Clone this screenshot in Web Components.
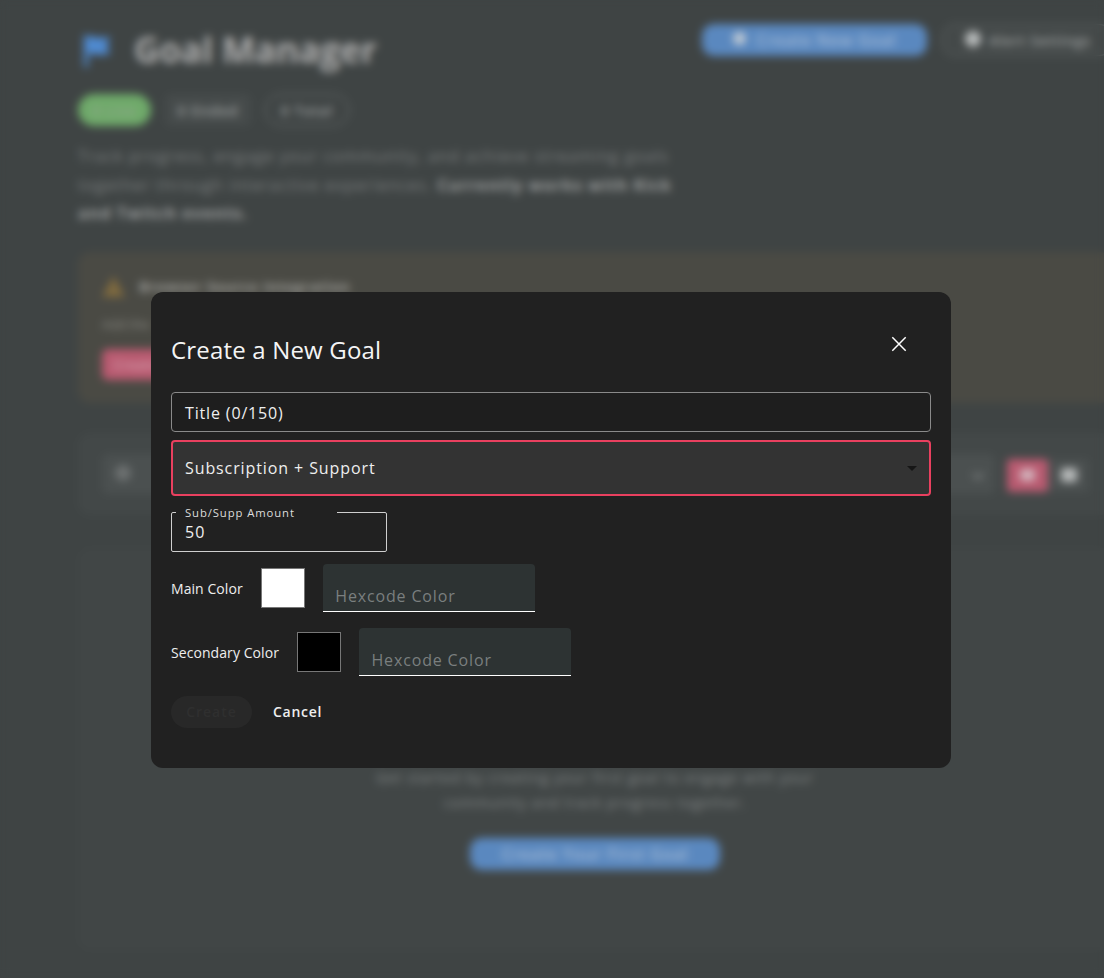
<!DOCTYPE html>
<html>
<head>
<meta charset="utf-8">
<title>Goal Manager</title>
<style>
html, body { margin: 0; height: 100%; overflow: hidden; background: #3f4444; }
body { font-family: "Open Sans", "Noto Sans", sans-serif; }
</style>
</head>
<body>
<goal-page>
  <goal-header></goal-header>
  <goal-alert></goal-alert>
  <goal-toolbar></goal-toolbar>
  <goal-empty></goal-empty>
</goal-page>
<goal-dialog></goal-dialog>

<script>
function shadow(el, html) {
  el.attachShadow({ mode: 'open' }).innerHTML = html
}

customElements.define('goal-page', class extends HTMLElement {
  connectedCallback() {
    shadow(this, `
      <style>
        :host { display: block; width: 1034px; padding: 24px 0 0 78px; color: #a9abab; }
        .col { display: flex; flex-direction: column; }
      </style>
      <div class="col"><slot></slot></div>`)
  }
})

customElements.define('pill-button', class extends HTMLElement {
  connectedCallback() {
    shadow(this, `
      <style>
        :host { display: inline-flex; align-items: center; justify-content: center; gap: 10px; box-sizing: border-box;
          height: 32px; border-radius: 12px; background: #5a88bf; color: #a5bbd6; font-size: 16px; font-weight: 600; letter-spacing: .8px; white-space: nowrap; }
        :host([kind=outline]) { background: #444949; color: #a0a3a3; border: 1px solid #666b6b; justify-content: flex-start; padding-left: 22px; gap: 8px; font-size: 14px; letter-spacing: .8px; }
        :host([kind=pink]) { background: #b95a70; color: #d39aaa; height: 31px; border-radius: 6px; font-size: 14px; justify-content: flex-start; padding-left: 11px; letter-spacing: 0; }
        i { width: 13px; height: 13px; margin-top: -3px; border-radius: 50%; background: #c4ccd4; }
        :host([kind=outline]) i { width: 16px; height: 16px; margin-top: -2px; background: #b9bcbc; }
      </style>
      <i part="dot"></i><slot></slot>`)
    if (!this.hasAttribute('icon')) this.shadowRoot.querySelector('i').remove()
  }
})

customElements.define('goal-chip', class extends HTMLElement {
  connectedCallback() {
    shadow(this, `
      <style>
        :host { display: inline-flex; align-items: center; justify-content: center; box-sizing: border-box; height: 32px; border-radius: 16px;
          font-size: 14px; font-weight: 600; letter-spacing: 1px; background: #6faa6a; color: #8fa88c; }
        :host([kind=plain]) { background: #464b4b; color: #a0a3a3; border-radius: 6px; }
        :host([kind=outline]) { background: none; border: 1px solid #767b7b; color: #a3a6a6; }
      </style>
      <slot></slot>`)
  }
})

customElements.define('goal-header', class extends HTMLElement {
  connectedCallback() {
    shadow(this, `
      <style>
        :host { display: block; height: 228px; }
        .top { display: flex; justify-content: space-between; height: 70px; }
        .brand { display: flex; align-items: center; gap: 22px; padding-left: 4px; height: 52px; }
        svg { width: 30px; height: 34px; display: block; }
        h1 { margin: 0; font-size: 35px; font-weight: 700; color: #adadad; line-height: 52px; }
        .actions { display: flex; gap: 15px; }
        .chips { display: flex; gap: 14px; }
        p { margin: 16px 0 0; width: 610px; font-size: 16px; letter-spacing: 1.1px; line-height: 28.5px; color: #7e8181; }
        b { color: #a0a2a2; }
      </style>
      <div class="top">
        <div class="brand">
          <svg viewBox="0 0 30 34"><path d="M2 2h4v2c6-1.500 9 .8 13 .8l9-.8-3 8.500 3 8.500-10 1c-4 0-7-2-12-1v13H2z" fill="#4f8ad0"/></svg>
          <h1>Goal Manager</h1>
        </div>
        <div class="actions">
          <pill-button icon style="width:225px;letter-spacing:.7px">Create New Goal</pill-button>
          <pill-button icon kind="outline" style="width:170px">Alert Settings</pill-button>
        </div>
      </div>
      <div class="chips">
        <goal-chip style="width:73px">0 Live</goal-chip>
        <goal-chip kind="plain" style="width:86px">0 Ended</goal-chip>
        <goal-chip kind="outline" style="width:84px">0 Total</goal-chip>
      </div>
      <p>Track progress, engage your community, and achieve streaming goals<br>together through interactive experiences. <b>Currently works with Kick</b><br><b>and Twitch events.</b></p>`)
  }
})

customElements.define('goal-alert', class extends HTMLElement {
  connectedCallback() {
    shadow(this, `
      <style>
        :host { display: block; box-sizing: border-box; height: 151px; padding: 23px 24px; background: #4a4a44; border-radius: 12px; }
        .head { display: flex; align-items: center; gap: 14px; height: 22px; font-size: 14px; font-weight: 700; letter-spacing: .75px; color: #a0a09c; }
        svg { width: 23px; height: 21px; display: block; }
        p { margin: 17px 0 0; font-size: 13px; line-height: 20px; color: #8a8a84; }
      </style>
      <div class="head">
        <svg viewBox="0 0 23 21"><path d="M11.5 0 23 21H0z" fill="#7f6a3f"/></svg>
        <span>Browser Source Integration</span>
      </div>
      <p>Add the</p>
      <pill-button kind="pink" style="width:120px;margin-top:15px">Create</pill-button>`)
  }
})

customElements.define('goal-toolbar', class extends HTMLElement {
  connectedCallback() {
    shadow(this, `
      <style>
        :host { display: flex; align-items: center; box-sizing: border-box; height: 82px; margin-top: 30px; padding: 0 23px 0 24px; background: #434848; border-radius: 12px; }
        .search { flex: 1; height: 40px; background: #4b5050; border-radius: 6px; display: flex; align-items: center; justify-content: space-between; padding: 0 5px 0 13px; }
        .search i { width: 16px; height: 16px; border-radius: 50%; background: #6d7171; margin-top: -2px; }
        .search svg { width: 24px; height: 24px; display: block; margin-top: 3px; }
        .toggle { width: 41px; height: 33px; margin: 2px 0 0 12px; background: #b95a70; border-radius: 4px; display: grid; place-items: center; }
        .toggle i { width: 15px; height: 12px; background: #d3b3bc; border-radius: 2px; }
        .plain { background: #4b5050; margin-left: 0; border-radius: 0 4px 4px 0; }
        .plain i { background: #b8bbbb; width: 16px; height: 14px; }
      </style>
      <div class="search"><i></i>
        <svg viewBox="0 0 24 24"><path d="M7.41 8.59 12 13.17l4.59-4.58L18 10l-6 6-6-6z" fill="#8a8e8e"/></svg>
      </div>
      <div class="toggle"><i></i></div>
      <div class="toggle plain"><i></i></div>`)
  }
})

customElements.define('goal-empty', class extends HTMLElement {
  connectedCallback() {
    shadow(this, `
      <style>
        :host { display: flex; flex-direction: column; align-items: center; box-sizing: border-box; height: 402px; margin-top: 33px; padding-top: 217px; background: #414646; border-radius: 12px; }
        p { margin: 0; width: 470px; text-align: center; font-size: 14px; letter-spacing: 1.05px; line-height: 25px; color: #868a8a; }
      </style>
      <p>Get started by creating your first goal to engage with your<br>community and track progress together.</p>
      <pill-button style="width:250px;margin-top:23px">Create Your First Goal</pill-button>`)
  }
})

customElements.define('text-box', class extends HTMLElement {
  connectedCallback() {
    shadow(this, `
      <style>
        :host { display: flex; align-items: center; box-sizing: border-box; height: 40px; padding: 2px 13px 0; border: 1px solid #8a8a8a; border-radius: 4px;
          font-size: 16px; letter-spacing: .85px; color: #eee; background: #1e1e1e; }
      </style>
      <slot></slot>`)
  }
})

customElements.define('select-box', class extends HTMLElement {
  connectedCallback() {
    shadow(this, `
      <style>
        :host { display: flex; align-items: center; justify-content: space-between; box-sizing: border-box; height: 56px; margin-top: 8px; padding: 0 12px;
          border: 2px solid #e9405f; border-radius: 4px; background: #333; font-size: 16px; letter-spacing: .9px; color: #eee; }
        i { width: 0; height: 0; border: 5px solid transparent; border-top-color: #161616; border-bottom: 0; }
      </style>
      <slot></slot><i></i>`)
  }
})

customElements.define('amount-box', class extends HTMLElement {
  connectedCallback() {
    shadow(this, `
      <style>
        :host { display: block; width: 216px; margin-top: 9px; }
        fieldset { box-sizing: border-box; margin: 0; height: 47px; padding: 0 13px; border: 1px solid #cfcfcf; border-radius: 2px; min-width: 0; }
        legend { margin-left: -9px; padding: 1px 42px 0 9px; font-size: 11.3px; line-height: 14px; letter-spacing: .9px; color: #ddd; white-space: nowrap; }
        div { font-size: 16px; line-height: 22px; letter-spacing: 1px; color: #eee; margin-top: 1px; }
      </style>
      <fieldset><legend><slot name="label"></slot></legend><div><slot></slot></div></fieldset>`)
  }
})

customElements.define('color-row', class extends HTMLElement {
  connectedCallback() {
    const color = this.getAttribute('color')
    shadow(this, `
      <style>
        :host { display: flex; align-items: center; height: 48px; margin-top: 16px; font-size: 14px; letter-spacing: .07px; color: #eee; }
        .swatch { box-sizing: border-box; width: 44px; height: 40px; margin: 0 18px; border: 1px solid #777; background: ${color}; }
        .field { box-sizing: border-box; width: 212px; height: 48px; padding: 20px 12px 0 12.500px; background: #2d3333; border-bottom: 1px solid #fff; border-radius: 4px 4px 0 0;
          font-size: 16px; line-height: 24px; letter-spacing: .85px; color: #7a7f7f; }
      </style>
      <slot></slot><div class="swatch"></div><div class="field">Hexcode Color</div>`)
  }
})

customElements.define('goal-dialog', class extends HTMLElement {
  connectedCallback() {
    shadow(this, `
      <style>
        :host { position: fixed; inset: 0; display: block; backdrop-filter: blur(4px); }
        .box { box-sizing: border-box; width: 800px; height: 476px; margin: 292px 0 0 151px; padding: 0 20px; background: #212121; border-radius: 12px; color: #fff; }
        .head { display: flex; justify-content: space-between; align-items: center; height: 100px; padding-top: 16px; box-sizing: border-box; }
        h2 { margin: 0; font-size: 24px; font-weight: 400; letter-spacing: .18px; line-height: 32px; color: #f5f5f5; }
        svg { width: 24px; height: 24px; display: block; margin: -13px 20px 0 0; }
        .actions { display: flex; align-items: center; margin-top: 20px; }
        .create { box-sizing: border-box; width: 81px; height: 32px; padding-bottom: 2px; border-radius: 16px; background: #282828; color: #2f2f2f; font-size: 14px; font-weight: 600; letter-spacing: 1px; display: grid; place-items: center; }
        .cancel { margin-left: 21px; padding-bottom: 2px; font-size: 14px; font-weight: 600; letter-spacing: .7px; color: #eee; }
      </style>
      <div class="box">
        <div class="head">
          <h2>Create a New Goal</h2>
          <svg viewBox="0 0 24 24"><path d="M5.300 5.300 18.700 18.700M18.700 5.300 5.300 18.700" fill="none" stroke="#fff" stroke-width="1.500"/></svg>
        </div>
        <text-box>Title (0/150)</text-box>
        <select-box>Subscription + Support</select-box>
        <amount-box><span slot="label">Sub/Supp Amount</span>50</amount-box>
        <color-row color="#fff" style="margin-top:12px">Main Color</color-row>
        <color-row color="#000">Secondary Color</color-row>
        <div class="actions">
          <div class="create">Create</div>
          <div class="cancel">Cancel</div>
        </div>
      </div>`)
  }
})
</script>
</body>
</html>
